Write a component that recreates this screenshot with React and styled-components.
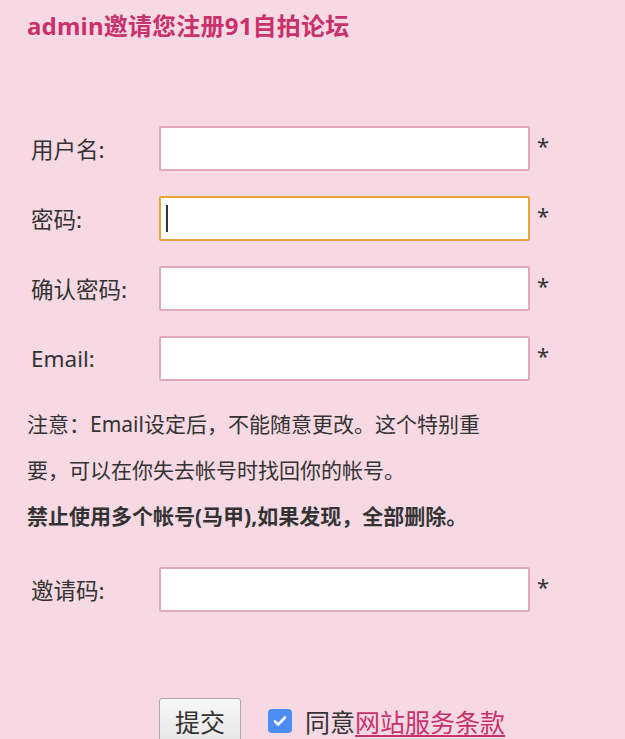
import React from 'react';
import styled, { createGlobalStyle } from 'styled-components';

const GlobalStyle = createGlobalStyle`
    html, body {
        margin: 0;
        padding: 0;
        background: #f6d9e3;
    }
    body {
        font-family: "Noto Sans", "Noto Sans CJK SC", sans-serif;
        color: #333;
    }
`;

const Page = styled.div`
    width: 625px;
    height: 739px;
    overflow: hidden;
    padding: 8px 0 0 27px;
    box-sizing: border-box;
`;

const Title = styled.h1`
    margin: 0;
    font-size: 24px;
    line-height: 36px;
    font-weight: 700;
    color: #c8316b;
    letter-spacing: 0.2px;
`;

const Form = styled.form`
    display: flex;
    flex-direction: column;
    margin-top: 82px;
`;

const Row = styled.div`
    display: grid;
    grid-template-columns: 132px 371px auto;
    align-items: center;
    height: 45px;
    margin-bottom: ${(p) => p.$gap || 25}px;
`;

const Label = styled.label`
    padding-left: 4px;
    font-size: 22.5px;
    color: #333;
`;

const Field = styled.div`
    position: relative;
    height: 45px;
`;

const Input = styled.input`
    box-sizing: border-box;
    width: 100%;
    height: 100%;
    margin: 0;
    padding: 0 8px;
    background: #fff;
    border: ${(p) => (p.$focused ? '2px solid #e7a23c' : '2px solid #e2a8bc')};
    border-radius: 2px;
    outline: none;
    font-size: 20px;
    font-family: inherit;
`;

const Caret = styled.span`
    position: absolute;
    left: 7px;
    top: 9px;
    width: 2px;
    height: 27px;
    background: #333;
`;

const Star = styled.span`
    padding: 0 0 7px 7px;
    font-size: 22px;
    line-height: 1;
    color: #333;
`;

const Note = styled.p`
    margin: 0;
    width: 472px;
    font-size: 21px;
    line-height: 46px;
    color: #333;
    font-weight: ${(p) => (p.$strong ? 700 : 400)};
`;

const Notes = styled.div`
    margin: -5px 0 28px;
`;

const Actions = styled.div`
    display: flex;
    align-items: center;
    margin-top: 61px;
    padding-left: 132px;
`;

const SubmitButton = styled.button`
    width: 82px;
    height: 46px;
    padding: 0;
    font-family: inherit;
    font-size: 25px;
    color: #333;
    background: linear-gradient(#f8f8f8, #e6e6e6);
    border: 1px solid #a9a9a9;
    border-radius: 3px;
`;

const Agree = styled.label`
    display: flex;
    align-items: center;
    margin-left: 27px;
    font-size: 25px;
    color: #333;
`;

const CheckBox = styled.span`
    display: inline-flex;
    align-items: center;
    justify-content: center;
    width: 24px;
    height: 24px;
    margin-right: 13px;
    border-radius: 4px;
    background: #4b8df2;
`;

const TermsLink = styled.a`
    color: #c8316b;
    text-decoration: underline;
    text-underline-offset: 3px;
`;

const fields = [
    { id: 'username', label: '用户名:' },
    { id: 'password', label: '密码:', focused: true },
    { id: 'password2', label: '确认密码:' },
    { id: 'email', label: 'Email:' }
];

export default function App() {
    return (
        <>
            <GlobalStyle />
            <Page>
                <Title>admin邀请您注册91自拍论坛</Title>
                <Form onSubmit={(e) => e.preventDefault()}>
                    {fields.map((f) => (
                        <Row key={f.id}>
                            <Label htmlFor={f.id}>{f.label}</Label>
                            <Field>
                                <Input id={f.id} type={f.id.startsWith('password') ? 'password' : 'text'} $focused={f.focused} />
                                {f.focused && <Caret />}
                            </Field>
                            <Star>*</Star>
                        </Row>
                    ))}
                    <Notes>
                        <Note>注意：Email设定后，不能随意更改。这个特别重要，可以在你失去帐号时找回你的帐号。</Note>
                        <Note $strong>禁止使用多个帐号(马甲),如果发现，全部删除。</Note>
                    </Notes>
                    <Row $gap={0}>
                        <Label htmlFor='invite'>邀请码:</Label>
                        <Field>
                            <Input id='invite' type='text' />
                        </Field>
                        <Star>*</Star>
                    </Row>
                    <Actions>
                        <SubmitButton type='submit'>提交</SubmitButton>
                        <Agree>
                            <CheckBox>
                                <svg width='16' height='16' viewBox='0 0 16 16'>
                                    <path d='M3 8.5l3.2 3.2L13 4.5' fill='none' stroke='#fff' strokeWidth='2.6' strokeLinecap='round' strokeLinejoin='round' />
                                </svg>
                            </CheckBox>
                            同意<TermsLink href='#'>网站服务条款</TermsLink>
                        </Agree>
                    </Actions>
                </Form>
            </Page>
        </>
    );
}
